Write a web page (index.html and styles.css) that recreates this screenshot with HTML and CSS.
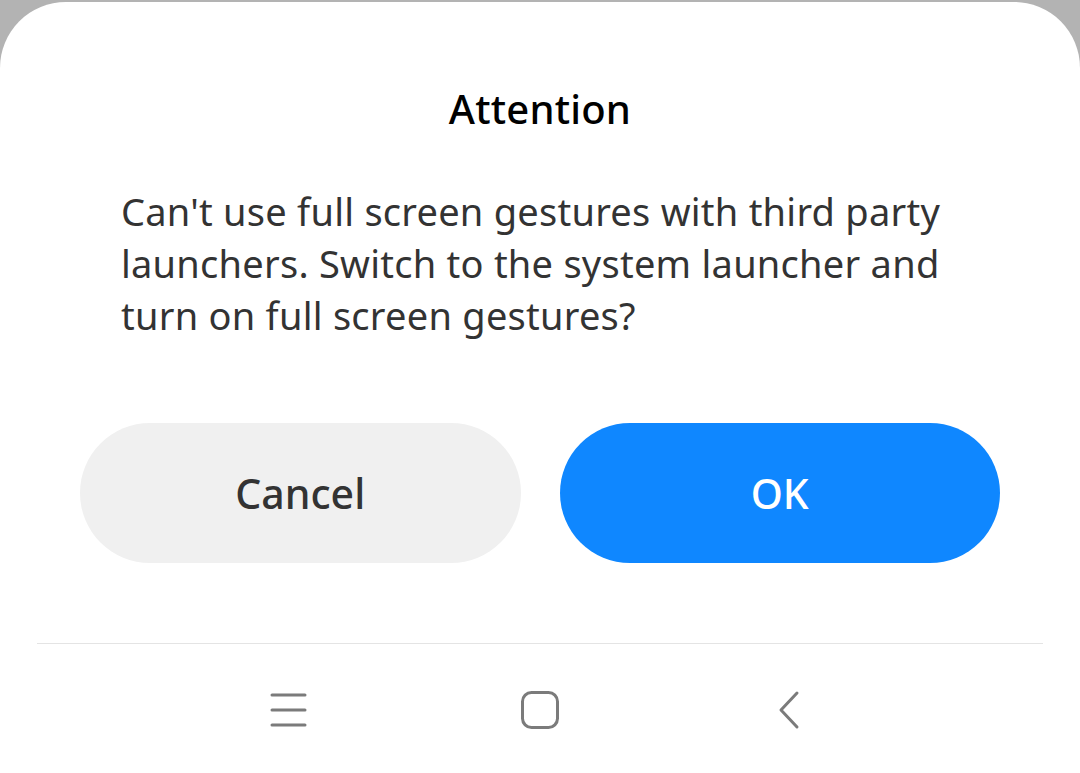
FILE: index.html
```html
<!DOCTYPE html>
<html>
<head>
<meta charset="utf-8">
<link rel="stylesheet" href="styles.css">
</head>
<body>
<div class="sheet">
  <h1 class="title">Attention</h1>
  <p class="message">Can't use full screen gestures with third party<br>launchers. Switch to the system launcher and<br>turn on full screen gestures?</p>
  <div class="actions">
    <button class="btn btn-cancel">Cancel</button>
    <button class="btn btn-ok">OK</button>
  </div>
  <div class="divider"></div>
  <nav class="navbar">
    <svg class="nav-icon" width="40" height="40" viewBox="0 0 40 40"><g stroke="#7b7b7b" stroke-width="3" stroke-linecap="round"><line x1="3" y1="5" x2="36" y2="5"/><line x1="3" y1="20" x2="36" y2="20"/><line x1="3" y1="35" x2="36" y2="35"/></g></svg>
    <svg class="nav-icon" width="40" height="40" viewBox="0 0 40 40"><rect x="2.5" y="2.5" width="35" height="35" rx="9" fill="none" stroke="#7b7b7b" stroke-width="3"/></svg>
    <svg class="nav-icon" width="40" height="40" viewBox="0 0 40 40"><polyline points="26,3 10,20 26,37" fill="none" stroke="#7b7b7b" stroke-width="3" stroke-linecap="round" stroke-linejoin="round"/></svg>
  </nav>
</div>
</body>
</html>
```
FILE: styles.css
```css
html, body {
  margin: 0;
  padding: 0;
  background: #b3b3b3;
  width: 1080px;
  height: 773px;
  overflow: hidden;
}
.sheet {
  margin-top: 2px;
  height: 771px;
  background: #ffffff;
  border-radius: 66px 66px 0 0;
  display: flex;
  flex-direction: column;
  font-family: "Noto Sans", Roboto, sans-serif;
}
.title {
  margin: 81px 0 0 0;
  text-align: center;
  font-size: 40px;
  font-weight: 500;
  color: #000;
  line-height: 52px;
  letter-spacing: 0.2px;
}
.message {
  margin: 50px 0 0 121px;
  font-size: 38px;
  line-height: 52px;
  color: #333333;
  letter-spacing: 0.25px;
}
.actions {
  margin: 82px 80px 0 80px;
  display: flex;
  gap: 39px;
}
.btn {
  flex: 1;
  height: 140px;
  border: none;
  border-radius: 70px;
  font-family: "Noto Sans", Roboto, sans-serif;
  font-size: 41px;
  font-weight: 500;
}
.btn-cancel {
  background: #f0f0f0;
  color: #333333;
}
.btn-ok {
  background: #0f87ff;
  color: #ffffff;
}
.divider {
  margin: 80px 37px 0 37px;
  height: 1px;
  background: #e4e4e4;
}
.navbar {
  display: flex;
  justify-content: center;
  gap: 211px;
  margin-top: 46px;
}
.nav-icon {
  display: block;
}
```
